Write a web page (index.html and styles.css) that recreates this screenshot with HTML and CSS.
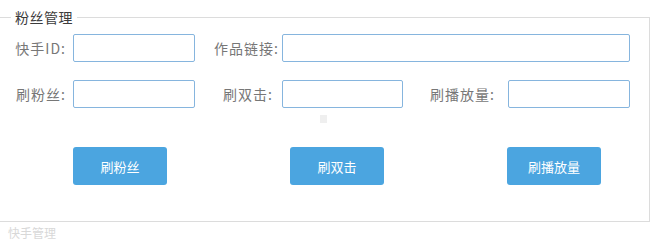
FILE: index.html
```html
<!DOCTYPE html>
<html lang="zh">
<head>
<meta charset="utf-8">
<title>粉丝管理</title>
<link rel="stylesheet" href="styles.css">
</head>
<body>
<fieldset class="panel">
  <legend class="panel-title">粉丝管理</legend>
  <div class="form-grid">
    <label class="lbl lbl-a">快手ID:</label>
    <input class="field" type="text">
    <label class="lbl lbl-b">作品链接:</label>
    <input class="field field-wide" type="text">

    <label class="lbl lbl-a">刷粉丝:</label>
    <input class="field" type="text">
    <label class="lbl lbl-c">刷双击:</label>
    <input class="field" type="text">
    <label class="lbl lbl-d">刷播放量:</label>
    <input class="field" type="text">
  </div>
  <div class="dot-row"><span class="dot"></span></div>
  <div class="actions">
    <button class="btn">刷粉丝</button>
    <button class="btn">刷双击</button>
    <button class="btn">刷播放量</button>
  </div>
</fieldset>
<div class="next-title">快手管理</div>
</body>
</html>
```
FILE: styles.css
```css
html, body {
  margin: 0;
  padding: 0;
  background: #ffffff;
  font-family: "Noto Sans CJK SC", "Noto Sans", sans-serif;
  overflow: hidden;
}

.panel {
  margin: 7px 0 0 -2px;
  width: 652px;
  box-sizing: border-box;
  height: 215px;
  border: 1px solid #dcdcdc;
  padding: 7px 0 0 0;
}

.panel-title {
  margin-left: 12px;
  padding: 0 4px 0 4px;
  font-size: 14px;
  line-height: 20px;
  letter-spacing: 0.5px;
  color: #3c3c3c;
}

.form-grid {
  display: grid;
  grid-template-columns: 74px 122px 87px 121px 105px 122px;
  grid-template-rows: 28px 28px;
  row-gap: 18px;
  align-items: center;
}

.lbl {
  font-size: 14px;
  letter-spacing: 1px;
  color: #777777;
  text-align: right;
  white-space: nowrap;
}
.lbl-a { padding-right: 7px; }
.lbl-b { padding-right: 3px; }
.lbl-c { padding-right: 9px; }
.lbl-d { padding-right: 13px; }

.field {
  box-sizing: border-box;
  height: 28px;
  width: 100%;
  margin: 0;
  border: 1px solid #86b5de;
  border-radius: 2px;
  background: #ffffff;
  outline: none;
}
.field-wide {
  grid-column: 4 / 7;
}

.dot-row {
  height: 39px;
  padding-left: 321px;
  box-sizing: border-box;
  padding-top: 7px;
}
.dot {
  display: block;
  width: 7px;
  height: 8px;
  background: #efefef;
}

.actions {
  display: grid;
  grid-template-columns: 94px 94px 94px;
  column-gap: 123px;
  padding-left: 74px;
}

.btn {
  height: 38px;
  width: 94px;
  border: none;
  border-radius: 3px;
  background: #4ba5e0;
  color: #ffffff;
  font-family: "Noto Sans CJK SC", "Noto Sans", sans-serif;
  font-size: 13px;
  padding: 0;
}

.next-title {
  margin: 4px 0 0 8px;
  font-size: 12px;
  color: #d8d8d8;
  line-height: 14px;
}
```
